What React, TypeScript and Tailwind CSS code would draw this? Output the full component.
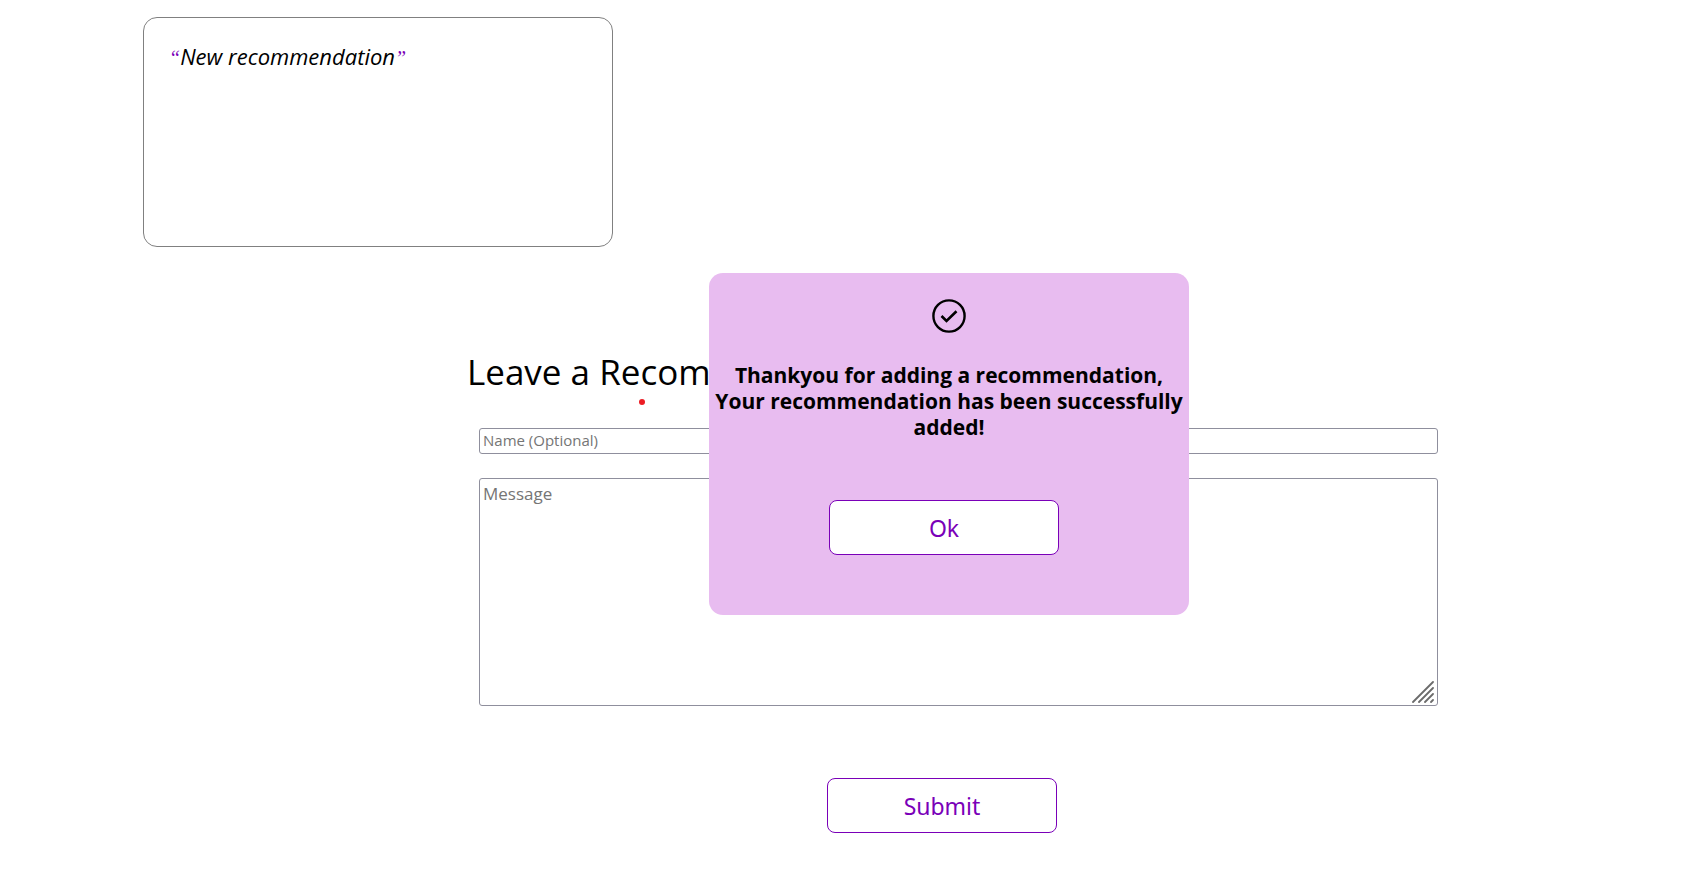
const buttonClass =
  'h-[55px] w-[230px] cursor-pointer rounded-lg border border-[#7a00b8] bg-white pt-px font-["Noto_Sans",sans-serif] text-[23px] text-[#7a00b8]';

const fieldClass =
  "block w-full rounded-[3px] border border-[#8f8f9d] bg-white px-[3px] text-black outline-none placeholder:text-[#757575] placeholder:opacity-100";

const quoteClass = 'font-["Liberation_Serif",serif] text-xl font-normal text-[#7a00b8]';

function RecommendationCard({ text }: { text: string }) {
  return (
    <article className="ml-[143px] h-[230px] w-[470px] rounded-[14px] border border-[#808080] px-[25px] pt-6">
      <blockquote className="text-[22px] leading-7 font-medium italic">
        <span className={quoteClass}>“</span>
        {text}
        <span className={quoteClass}>”</span>
      </blockquote>
    </article>
  );
}

function SuccessDialog() {
  return (
    <div
      role="dialog"
      aria-labelledby="dialog-message"
      className="absolute top-[273px] left-[709px] flex h-[342px] w-[480px] flex-col items-center rounded-[14px] bg-[#e8bcf0] pt-[25px]"
    >
      <svg viewBox="0 0 36 36" className="size-9" fill="none" stroke="black" aria-hidden="true">
        <circle cx="18" cy="18" r="15.6" strokeWidth="2.4" />
        <path d="M10.5 18 L15.5 23 L25.5 13.2" strokeWidth="2.6" />
      </svg>
      <p id="dialog-message" className="mt-7 text-center text-[21px] leading-[26px] font-bold">
        Thankyou for adding a recommendation,
        <br />
        Your recommendation has been successfully
        <br />
        added!
      </p>
      <button type="button" className={`${buttonClass} mt-15 mr-[10px]`}>
        Ok
      </button>
    </div>
  );
}

export default function App() {
  return (
    <main className='relative bg-white pt-[17px] pb-11 font-["Open_Sans",sans-serif] text-black'>
      <RecommendationCard text="New recommendation" />

      <section className="mt-[100px] mr-[260px] ml-[479px]">
        <h1 className="-ml-3 h-[81px] text-[35px] leading-[50px] whitespace-nowrap">
          Leave a Recommendation
        </h1>
        <form onSubmit={(event) => event.preventDefault()}>
          <input
            type="text"
            aria-label="Name (Optional)"
            placeholder="Name (Optional)"
            className={`${fieldClass} h-[26px] pb-[2px] text-[15px]`}
          />
          <div className="relative mt-6">
            <textarea
              aria-label="Message"
              placeholder="Message"
              className={`${fieldClass} h-[228px] resize-none pt-[2px] text-[17px]`}
            />
            <svg
              viewBox="0 0 22 22"
              className="pointer-events-none absolute right-1 bottom-[3px] size-[22px]"
              stroke="#6b6b6b"
              strokeWidth="1.8"
              strokeLinecap="round"
              aria-hidden="true"
            >
              <path d="M1 21 L21 1 M7 21 L21 7 M13 21 L21 13 M19 21 L21 19" />
            </svg>
          </div>
          <div className="mt-[72px] flex justify-center pr-[33px]">
            <button type="submit" className={buttonClass}>
              Submit
            </button>
          </div>
        </form>
      </section>

      <span className="absolute top-[399px] left-[639px] size-[6px] rounded-full bg-[#ec1c24]" />
      <SuccessDialog />
    </main>
  );
}
